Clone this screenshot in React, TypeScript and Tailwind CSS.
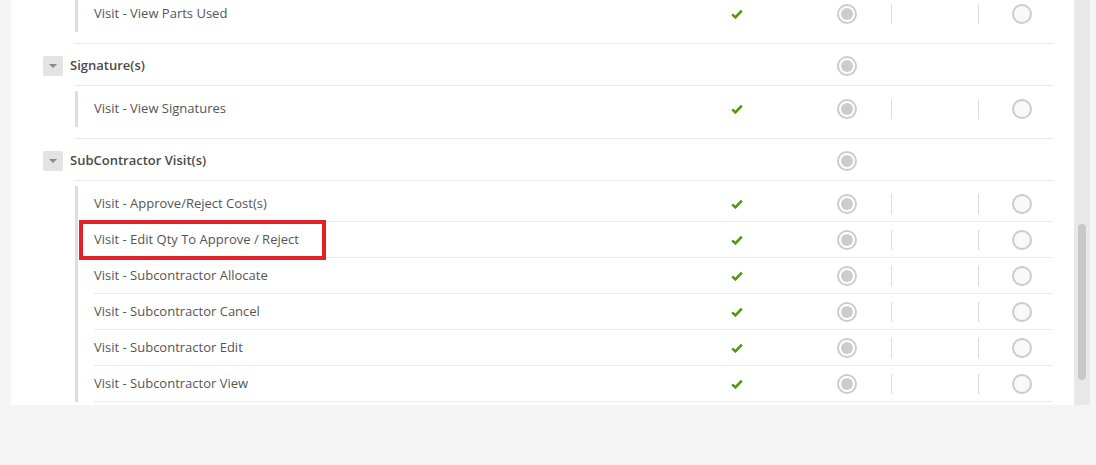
type Row = { label: string; flagged?: boolean };
type Group = { title?: string; rows: Row[]; continues?: boolean };

const groups: Group[] = [
  { rows: [{ label: "Visit - View Parts Used" }] },
  { title: "Signature(s)", rows: [{ label: "Visit - View Signatures" }] },
  {
    title: "SubContractor Visit(s)",
    continues: true,
    rows: [
      { label: "Visit - Approve/Reject Cost(s)" },
      { label: "Visit - Edit Qty To Approve / Reject", flagged: true },
      { label: "Visit - Subcontractor Allocate" },
      { label: "Visit - Subcontractor Cancel" },
      { label: "Visit - Subcontractor Edit" },
      { label: "Visit - Subcontractor View" },
    ],
  },
];

function Check() {
  return (
    <svg width="12" height="10" viewBox="0 0 12 10" className="block shrink-0">
      <path
        d="M1.2 5.4 L4.4 8.4 L10.8 1.6"
        fill="none"
        stroke="#4f9a0c"
        strokeWidth="2.6"
        strokeLinejoin="miter"
      />
    </svg>
  );
}

function RadioOn() {
  return (
    <span className="flex h-5 w-5 shrink-0 items-center justify-center rounded-full border-2 border-[#cccccc] bg-white">
      <span className="h-3 w-3 rounded-full bg-[#cccccc]" />
    </span>
  );
}

function RadioOff() {
  return (
    <span className="block h-5 w-5 shrink-0 rounded-full border-2 border-[#cccccc] bg-[#f8f8f8]" />
  );
}

function Divider() {
  return <span className="block h-5 w-px shrink-0 bg-[#dddddd]" />;
}

function Columns({ header }: { header?: boolean }) {
  return (
    <div className="flex items-center pr-[21px]">
      <span className={header ? "invisible" : ""}>
        <Check />
      </span>
      <span className="ml-[94px]">
        <RadioOn />
      </span>
      <span className={header ? "invisible ml-[34px]" : "ml-[34px]"}>
        <Divider />
      </span>
      <span className={header ? "invisible ml-[86px]" : "ml-[86px]"}>
        <Divider />
      </span>
      <span className={header ? "invisible ml-[33px]" : "ml-[33px]"}>
        <RadioOff />
      </span>
    </div>
  );
}

function GroupBlock({ group, first }: { group: Group; first?: boolean }) {
  return (
    <div>
      {group.title && (
        <div className="flex h-[41px] items-center pt-[3px]">
          <span className="flex h-5 w-5 items-center justify-center rounded-[2px] bg-[#e3e3e3]">
            <span className="h-0 w-0 border-x-[4px] border-t-[4px] border-x-transparent border-t-[#8a8a8a]" />
          </span>
          <span className="ml-[7px] flex-1 text-[13px] font-semibold text-[#4a4a4a]">
            {group.title}
          </span>
          <Columns header />
        </div>
      )}
      <div
        className={
          first
            ? "ml-[32px] -mt-[4px] border-b border-[#e9e9e9] pb-[11px]"
            : "ml-[32px] border-y border-[#e9e9e9] pt-[5px] pb-[11px]"
        }
      >
        <div className="border-l-[3px] border-[#dedede] pl-[16px]">
          {group.rows.map((row, i) => (
            <div
              key={row.label}
              className={
                group.continues || i < group.rows.length - 1
                  ? "flex h-[36px] items-center border-b border-[#ebebeb]"
                  : "flex h-[36px] items-center"
              }
            >
              <span className="relative flex-1 text-[13px] text-[#555555]">
                {row.label}
                {row.flagged && (
                  <span className="absolute -left-[15px] -top-[10px] h-[40px] w-[247px] border-4 border-[#e32228]" />
                )}
              </span>
              <Columns />
            </div>
          ))}
        </div>
      </div>
    </div>
  );
}

export default function App() {
  return (
    <div
      className="h-[465px] w-[1096px] bg-[#f5f5f5]"
      style={{ fontFamily: '"Open Sans", "Liberation Sans", sans-serif' }}
    >
      <div className="ml-[11px] flex h-[405px] w-[1079px]">
        <div className="flex-1 overflow-hidden bg-white pl-[32px] pr-[21px]">
          {groups.map((g, i) => (
            <GroupBlock key={i} group={g} first={i === 0} />
          ))}
        </div>
        <div className="flex w-[16px] flex-col bg-[#e8e8e8] pt-[224px]">
          <div className="mx-auto h-[156px] w-[8px] rounded-full bg-[#c8c8c8]" />
        </div>
      </div>
    </div>
  );
}
